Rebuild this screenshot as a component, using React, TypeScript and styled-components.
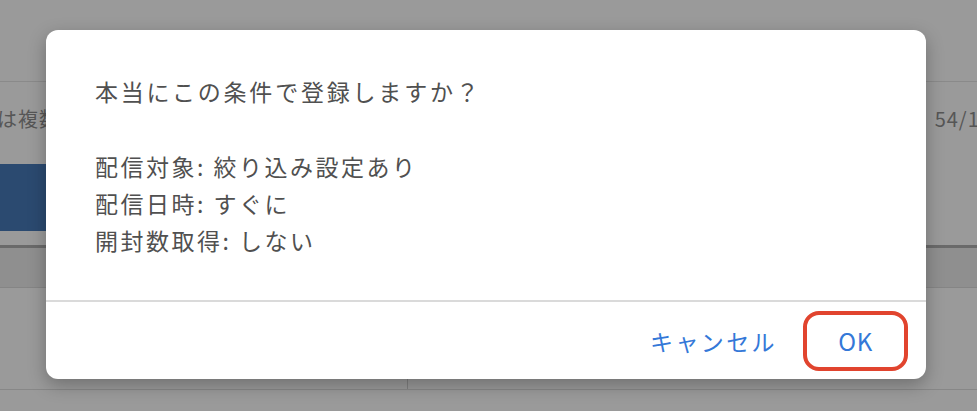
import React from "react";
import styled, { createGlobalStyle } from "styled-components";

const Global = createGlobalStyle`
  html, body { margin: 0; padding: 0; background: #9a9a9a; }
  body { font-family: "Noto Sans CJK JP", "Noto Sans", sans-serif; }
`;

const Page = styled.div`
  position: relative;
  width: 977px;
  height: 411px;
  overflow: hidden;
  background: #9a9a9a;
  display: flex;
  flex-direction: column;
`;

const TopBar = styled.div`
  height: 82px;
  border-bottom: 1px solid #8a8a8a;
  box-sizing: border-box;
`;

const InfoRow = styled.div`
  height: 82px;
  display: flex;
  align-items: center;
  justify-content: space-between;
  font-size: 20px;
  color: #565656;
  padding-bottom: 10px;
  box-sizing: border-box;
`;

const InfoText = styled.span<{ $shiftLeft?: number; $shiftRight?: number }>`
  margin-left: ${(p) => p.$shiftLeft ?? 0}px;
  margin-right: ${(p) => p.$shiftRight ?? 0}px;
  white-space: nowrap;
  letter-spacing: 1px;
`;

const BlueBar = styled.div`
  height: 67px;
  width: 420px;
  background: #2b4a70;
`;

const Spacer = styled.div<{ $h: number }>`
  height: ${(p) => p.$h}px;
`;

const HeadBand = styled.div`
  height: 43px;
  border-top: 3px solid #6a6a6a;
  border-bottom: 1px solid #858585;
  background: #8f8f8f;
  box-sizing: border-box;
`;

const TableRow = styled.div`
  height: 102px;
  display: grid;
  grid-template-columns: 408px 1fr;
  border-bottom: 1px solid #878787;
  box-sizing: border-box;
`;

const Cell = styled.div<{ $divider?: boolean }>`
  border-right: ${(p) => (p.$divider ? "1px solid #808080" : "none")};
`;

const Dialog = styled.div`
  position: absolute;
  left: 46px;
  top: 30px;
  width: 880px;
  height: 349px;
  background: #ffffff;
  border-radius: 12px;
  box-shadow: 0 6px 18px rgba(0, 0, 0, 0.28);
  display: flex;
  flex-direction: column;
  overflow: hidden;
`;

const Body = styled.div`
  flex: 1;
  padding: 43px 40px 0 49px;
  color: #505050;
  font-size: 23px;
  letter-spacing: 2.5px;
`;

const Title = styled.p`
  margin: 0 0 39px;
  line-height: 36px;
  letter-spacing: 2.8px;
`;

const Line = styled.p`
  margin: 0;
  line-height: 37px;
`;

const Divider = styled.div`
  height: 2px;
  background: #dadada;
`;

const Footer = styled.div`
  height: 77px;
  display: flex;
  align-items: center;
  justify-content: flex-end;
  gap: 26px;
  padding-right: 18px;
`;

const ActionButton = styled.button<{ $highlight?: boolean }>`
  font-family: "Noto Sans CJK JP", "Noto Sans", sans-serif;
  font-size: ${(p) => (p.$highlight ? "24px" : "23px")};
  letter-spacing: ${(p) => (p.$highlight ? "0.5px" : "2.4px")};
  color: #3478d8;
  background: transparent;
  border: ${(p) => (p.$highlight ? "4px solid #e1442e" : "none")};
  border-radius: 16px;
  height: 60px;
  width: ${(p) => (p.$highlight ? "105px" : "auto")};
  padding: 0;
  display: flex;
  align-items: center;
  justify-content: center;
  cursor: pointer;
`;

export default function App() {
  return (
    <>
      <Global />
      <Page>
        <TopBar />
        <InfoRow>
          <InfoText $shiftLeft={-3}>は複数選択できます</InfoText>
          <InfoText $shiftRight={-27}>54/100</InfoText>
        </InfoRow>
        <BlueBar />
        <Spacer $h={14} />
        <HeadBand />
        <TableRow>
          <Cell $divider />
          <Cell />
        </TableRow>
        <Dialog>
          <Body>
            <Title>本当にこの条件で登録しますか？</Title>
            <Line>配信対象: 絞り込み設定あり</Line>
            <Line>配信日時: すぐに</Line>
            <Line>開封数取得: しない</Line>
          </Body>
          <Divider />
          <Footer>
            <ActionButton>キャンセル</ActionButton>
            <ActionButton $highlight>OK</ActionButton>
          </Footer>
        </Dialog>
      </Page>
    </>
  );
}
